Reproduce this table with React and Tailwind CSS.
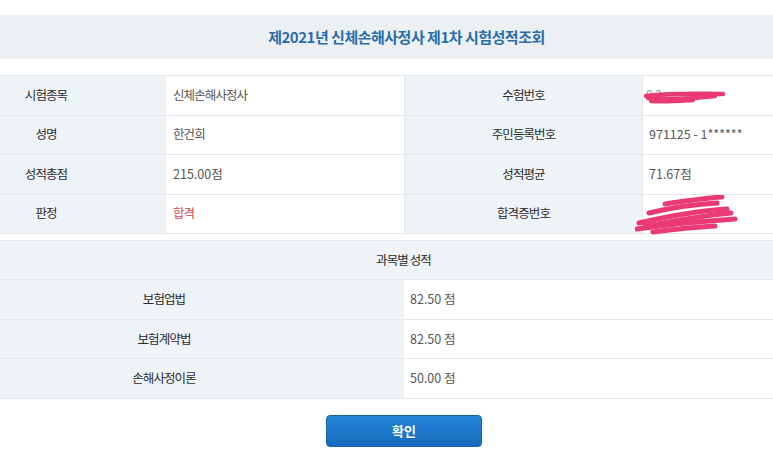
import React from 'react';

const font = { fontFamily: '"Noto Sans CJK KR", "Noto Sans", sans-serif' };

const info = [
    { l1: '시험종목', v1: '신체손해사정사', l2: '수험번호', v2: 'redact1' },
    { l1: '성명', v1: '한건희', l2: '주민등록번호', v2: '971125 - 1******' },
    { l1: '성적총점', v1: '215.00점', l2: '성적평균', v2: '71.67점' },
    { l1: '판정', v1: '합격', l2: '합격증번호', v2: 'redact2', red: true },
];

const subjects = [
    { name: '보험업법', score: '82.50 점' },
    { name: '보험계약법', score: '82.50 점' },
    { name: '손해사정이론', score: '50.00 점' },
];

// hangul-only text is set tighter than numbers
const tight = (t) => (/\d/.test(t) ? 'tracking-normal' : 'tracking-[-0.9px]');

const Scribble1 = () => (
    <svg className="absolute left-0 top-0" width="100" height="40" viewBox="0 0 100 40" fill="none">
        <text x="3" y="23" fontSize="12" fill="#999" style={font}>0 2</text>
        <g stroke="#e8306c" strokeWidth="4.5" strokeLinecap="round" opacity="0.95">
            <path d="M3 20 C 20 18, 40 17, 80 18" />
            <path d="M5 22 C 25 24, 45 23, 72 20" />
            <path d="M8 25 C 22 26, 34 25, 50 24" />
        </g>
    </svg>
);

const Scribble2 = () => (
    <svg className="absolute left-[-8px] top-0" width="110" height="42" viewBox="0 0 110 42" fill="none">
        <g stroke="#e8306c" strokeWidth="5" strokeLinecap="round" opacity="0.95">
            <path d="M30 9 C 50 6, 70 3, 87 2" />
            <path d="M14 18 C 40 12, 60 9, 82 8" />
            <path d="M4 28 C 30 22, 60 16, 92 14" />
            <path d="M2 34 C 30 30, 70 26, 100 24" />
            <path d="M18 37 C 40 34, 60 32, 80 31" />
            <path d="M10 31 C 40 26, 70 20, 96 18" />
        </g>
    </svg>
);

const App = () => {
    return (
        <div className="min-h-screen bg-white pt-[15px]" style={font}>
            {/* Title */}
            <div className="h-[44px] bg-[#edf0f3] flex items-center justify-center">
                <h1 className="text-[15px] font-semibold tracking-[-0.5px] text-[#2a6dab] pl-[40px]">
                    제2021년 신체손해사정사 제1차 시험성적조회
                </h1>
            </div>

            {/* Info table */}
            <div className="mt-[16px] border-t border-[#e4e7eb] grid grid-cols-[166px_238px_238px_1fr] text-[12.5px] tracking-[-0.9px]">
                {info.map((row, i) => (
                    <React.Fragment key={i}>
                        <div className="h-[39.5px] bg-[#eef3f8] border-b border-[#e4e7eb] flex items-center justify-center pr-[74px] text-[#2b2b2b]">
                            {row.l1}
                        </div>
                        <div className={`h-[39.5px] border-b border-[#e4e7eb] flex items-center pl-[7px] ${tight(row.v1)} ${row.red ? 'text-[#d4464b]' : 'text-[#555]'}`}>
                            {row.v1}
                        </div>
                        <div className="h-[39.5px] bg-[#eef3f8] border-b border-l border-[#e4e7eb] flex items-center justify-center text-[#2b2b2b]">
                            {row.l2}
                        </div>
                        <div className="relative h-[39.5px] border-b border-l border-[#e4e7eb] flex items-center pl-[6px] tracking-normal text-[#555]">
                            {row.v2 === 'redact1' ? <Scribble1 /> : row.v2 === 'redact2' ? <Scribble2 /> : row.v2}
                        </div>
                    </React.Fragment>
                ))}
            </div>

            {/* Subject table */}
            <div className="mt-[6px] border-t border-[#e4e7eb] text-[12.5px] tracking-[-0.9px]">
                <div className="h-[39px] bg-[#eef3f8] border-b border-[#e4e7eb] flex items-center justify-center pl-[34px] text-[#2b2b2b]">
                    과목별 성적
                </div>
                {subjects.map((s) => (
                    <div key={s.name} className="grid grid-cols-[404px_1fr]">
                        <div className="h-[39.7px] bg-[#eef3f8] border-b border-[#e4e7eb] flex items-center justify-center pr-[76px] text-[#2b2b2b]">
                            {s.name}
                        </div>
                        <div className="h-[39.7px] border-b border-[#e4e7eb] flex items-center pl-[6px] tracking-normal text-[#555]">
                            {s.score}
                        </div>
                    </div>
                ))}
            </div>

            {/* Button */}
            <div className="flex justify-center mt-[16px] pl-[35px]">
                <button className="w-[156px] h-[32px] rounded-[4px] bg-gradient-to-b from-[#2686d8] to-[#176abd] border border-[#1560ad] text-white text-[13px] font-bold">
                    확인
                </button>
            </div>
        </div>
    );
};

export default App;
